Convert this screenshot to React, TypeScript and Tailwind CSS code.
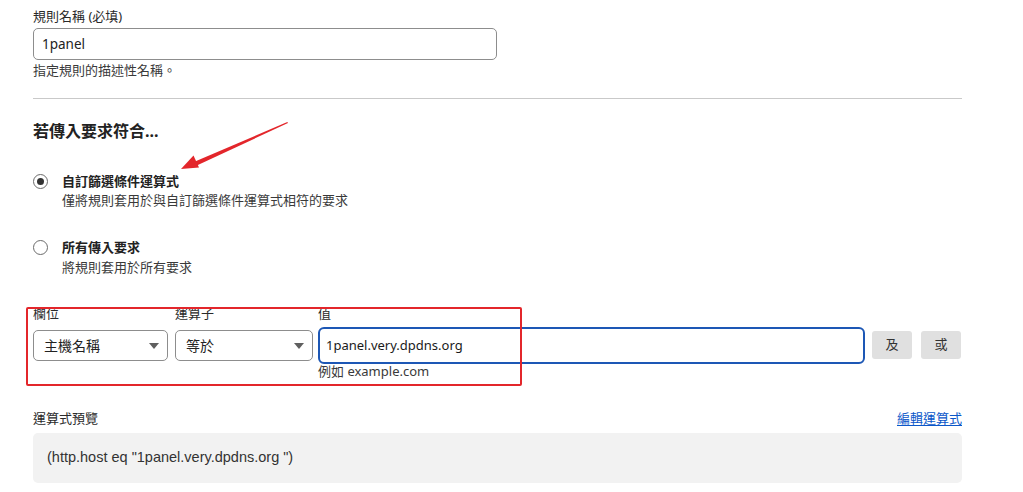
import React from "react";

const font = { fontFamily: '"Noto Sans", "Noto Sans CJK TC", sans-serif' };

function Caret() {
  return (
    <svg width="10" height="6" viewBox="0 0 10 6" className="shrink-0">
      <path d="M0 0h10L5 6z" fill="#5f5f5f" />
    </svg>
  );
}

function Radio({ checked }: { checked?: boolean }) {
  return (
    <span className="mt-[2px] flex h-[15px] w-[15px] shrink-0 items-center justify-center rounded-full border border-[#6b6b6b] bg-white">
      {checked && <span className="h-[7px] w-[7px] rounded-full bg-[#333]" />}
    </span>
  );
}

function Select({ value, width }: { value: string; width: string }) {
  return (
    <div
      className={`${width} mt-[3px] flex h-[31px] items-center justify-between rounded-[5px] border border-[#8d8d8d] bg-white pl-[10px] pr-[8px] text-[14px] text-[#222]`}
    >
      <span>{value}</span>
      <Caret />
    </div>
  );
}

export default function App() {
  return (
    <div
      className="relative h-[492px] w-[1023px] overflow-hidden bg-white text-[#1f1f1f]"
      style={font}
    >
      <div className="ml-[33px] w-[929px] pt-[8px]">
        <div className="text-[13px] leading-[16px] text-[#2a2a2a]">規則名稱 (必填)</div>
        <div className="mt-[4px] flex h-[32px] w-[464px] items-center rounded-[5px] border border-[#8d8d8d] px-[8px] text-[13.5px] text-[#222]">
          1panel
        </div>
        <div className="mt-[2px] text-[13px] leading-[16px] text-[#3a3a3a]">指定規則的描述性名稱。</div>

        <div className="mt-[20px] border-t border-[#c9c9c9]" />

        <h2 className="mt-[22px] text-[16px] font-bold leading-[20px] text-[#222]">若傳入要求符合...</h2>

        <div className="mt-[31px] flex gap-[14px]">
          <Radio checked />
          <div>
            <div className="text-[13px] font-bold leading-[18px] text-[#222]">自訂篩選條件運算式</div>
            <div className="mt-[1px] text-[13px] leading-[18px] text-[#3a3a3a]">
              僅將規則套用於與自訂篩選條件運算式相符的要求
            </div>
          </div>
        </div>

        <div className="mt-[29px] flex gap-[14px]">
          <Radio />
          <div>
            <div className="text-[13px] font-bold leading-[18px] text-[#222]">所有傳入要求</div>
            <div className="mt-[2px] text-[13px] leading-[18px] text-[#3a3a3a]">將規則套用於所有要求</div>
          </div>
        </div>

        <div className="mt-[29px] flex text-[13px] leading-[16px] text-[#2a2a2a]">
          <div className="w-[142px]">欄位</div>
          <div className="w-[143px]">運算子</div>
          <div>值</div>
        </div>

        <div className="mt-[6px] flex items-start">
          <Select value="主機名稱" width="w-[135px]" />
          <div className="w-[7px]" />
          <Select value="等於" width="w-[138px]" />
          <div className="w-[5px]" />
          <div className="w-[547px]">
            <div className="flex h-[37px] items-center rounded-[6px] border-2 border-[#1d57b5] px-[6px] text-[13px] text-[#1a1a1a]">
              1panel.very.dpdns.org
            </div>
            <div className="text-[13px] leading-[14px] text-[#3a3a3a]">例如 example.com</div>
          </div>
          <button className="ml-[7px] mt-[4px] h-[28px] w-[40px] rounded-[3px] bg-[#e0e0e0] text-[13px] text-[#333]">
            及
          </button>
          <button className="ml-[9px] mt-[4px] h-[28px] w-[40px] rounded-[3px] bg-[#e0e0e0] text-[13px] text-[#333]">
            或
          </button>
        </div>

        <div className="mt-[32px] flex items-center justify-between text-[13px] leading-[16px]">
          <span className="text-[#2a2a2a]">運算式預覽</span>
          <a className="text-[#0b57c9] underline underline-offset-2">編輯運算式</a>
        </div>

        <div
          className="mt-[7px] flex h-[50px] items-center rounded-[5px] bg-[#f2f2f2] px-[14px] text-[14.5px] text-[#333]"
          style={{ fontFamily: '"Liberation Sans", Arial, sans-serif' }}
        >
          (http.host eq "1panel.very.dpdns.org ")
        </div>
      </div>

      {/* annotation: red box */}
      <div className="pointer-events-none absolute left-[26px] top-[307px] h-[79px] w-[496px] rounded-[2px] border-2 border-[#e3262b]" />

      {/* annotation: arrow */}
      <svg className="pointer-events-none absolute left-0 top-0" width="1023" height="492">
        <polygon points="288,123 287.3,122 195,161.5 196.8,165.5" fill="#e3262b" />
        <polygon points="181,169 199,167.5 193.5,155.5" fill="#e3262b" />
      </svg>
    </div>
  );
}
